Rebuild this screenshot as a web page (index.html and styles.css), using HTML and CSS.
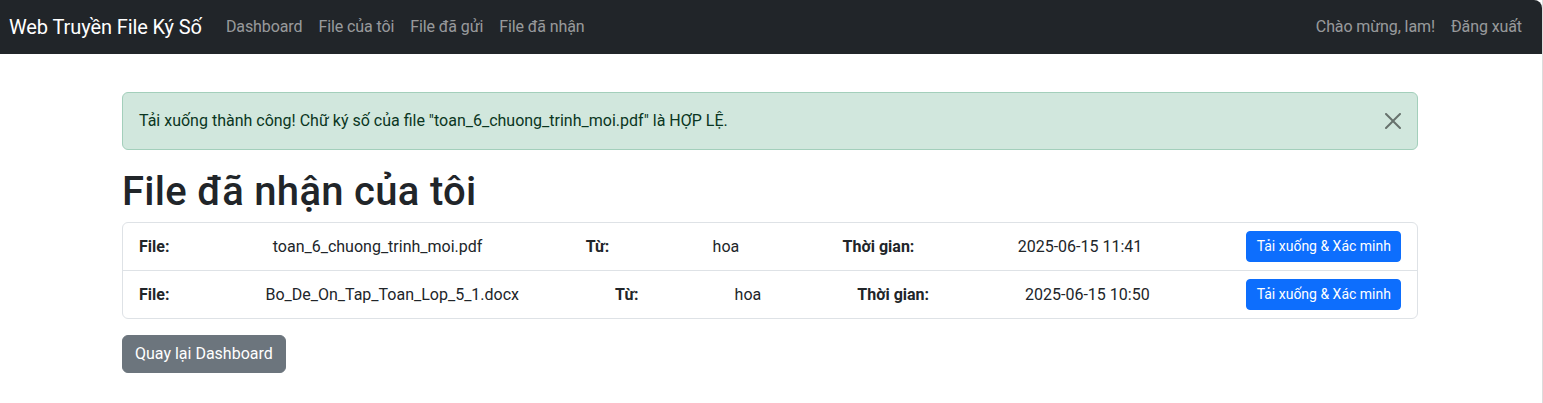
FILE: index.html
```html
<!DOCTYPE html>
<html lang="vi">
<head>
<meta charset="utf-8">
<title>File đã nhận</title>
<link rel="stylesheet" href="styles.css">
</head>
<body>
<div class="page">
  <nav class="navbar">
    <div class="nav-left">
      <a class="brand" href="#">Web Truyền File Ký Số</a>
      <ul class="nav-links">
        <li><a href="#">Dashboard</a></li>
        <li><a href="#">File của tôi</a></li>
        <li><a href="#">File đã gửi</a></li>
        <li><a href="#">File đã nhận</a></li>
      </ul>
    </div>
    <div class="nav-right">
      <span class="nav-text">Chào mừng, lam!</span>
      <a class="nav-link" href="#">Đăng xuất</a>
    </div>
  </nav>

  <main class="container">
    <div class="alert">
      <span>Tải xuống thành công! Chữ ký số của file "toan_6_chuong_trinh_moi.pdf" là HỢP LỆ.</span>
      <button class="btn-close" type="button" aria-label="Close">
        <svg viewBox="0 0 16 16" width="16" height="16"><path d="M.293.293a1 1 0 0 1 1.414 0L8 6.586 14.293.293a1 1 0 1 1 1.414 1.414L9.414 8l6.293 6.293a1 1 0 0 1-1.414 1.414L8 9.414l-6.293 6.293a1 1 0 0 1-1.414-1.414L6.586 8 .293 1.707a1 1 0 0 1 0-1.414z" fill="#000"/></svg>
      </button>
    </div>

    <h1 class="title">File đã nhận của tôi</h1>

    <ul class="list">
      <li class="list-item">
        <strong>File:</strong>
        <span>toan_6_chuong_trinh_moi.pdf</span>
        <strong>Từ:</strong>
        <span>hoa</span>
        <strong>Thời gian:</strong>
        <span>2025-06-15 11:41</span>
        <a class="btn btn-primary btn-sm" href="#">Tải xuống &amp; Xác minh</a>
      </li>
      <li class="list-item">
        <strong>File:</strong>
        <span>Bo_De_On_Tap_Toan_Lop_5_1.docx</span>
        <strong>Từ:</strong>
        <span>hoa</span>
        <strong>Thời gian:</strong>
        <span>2025-06-15 10:50</span>
        <a class="btn btn-primary btn-sm" href="#">Tải xuống &amp; Xác minh</a>
      </li>
    </ul>

    <a class="btn btn-secondary" href="#">Quay lại Dashboard</a>
  </main>
</div>
</body>
</html>
```
FILE: styles.css
```css
* { box-sizing: border-box; }
html, body { margin: 0; padding: 0; background: #fff; }
body {
  font-family: Roboto, "Liberation Sans", sans-serif;
  font-size: 16px;
  line-height: 1.5;
  color: #212529;
}
.page {
  width: 1543px;
  min-height: 403px;
  border-right: 1px solid #dcdcdc;
}
a { text-decoration: none; }

.navbar {
  height: 54px;
  background: #212529;
  display: flex;
  align-items: center;
  justify-content: space-between;
  padding: 0 12px 0 9px;
  border-top-right-radius: 8px;
}
.nav-left, .nav-right { display: flex; align-items: center; }
.brand {
  color: #fff;
  font-size: 20px;
  line-height: 30px;
  margin-right: 16px;
  letter-spacing: -0.1px;
}
.nav-links {
  list-style: none;
  display: flex;
  margin: 0;
  padding: 0;
}
.nav-links a, .nav-link, .nav-text {
  display: block;
  padding: 0 8px;
  color: rgba(255,255,255,.55);
  line-height: 24px;
  letter-spacing: -0.1px;
}

.container {
  width: 1320px;
  margin: 0 0 0 110px;
  padding: 38px 12px 0;
}

.alert {
  position: relative;
  background: #d1e7dd;
  border: 1px solid #a3cfbb;
  color: #0a3622;
  border-radius: 6px;
  padding: 16px 48px 16px 16px;
  margin-bottom: 16px;
}
.btn-close {
  position: absolute;
  top: 0;
  right: 0;
  padding: 20px 16px;
  border: 0;
  background: transparent;
  opacity: .5;
  line-height: 0;
  cursor: pointer;
}
.btn-close svg { display: block; }

.title {
  font-size: 40px;
  font-weight: 500;
  line-height: 1.2;
  margin: 0 0 8px;
  color: #212529;
  letter-spacing: 0.3px;
  padding-top: 2px;
  height: 48px;
}

.list {
  list-style: none;
  margin: 0;
  padding: 0;
  border: 1px solid #dee2e6;
  border-radius: 6px;
}
.list-item {
  display: flex;
  align-items: center;
  justify-content: space-between;
  padding: 8px 16px;
}
.list-item + .list-item { border-top: 1px solid #dee2e6; }
.list-item strong { font-weight: 700; }

.btn {
  display: inline-block;
  color: #fff;
  border: 1px solid transparent;
  text-align: center;
}
.btn-primary { background: #0d6efd; border-color: #0d6efd; }
.btn-sm {
  font-size: 14px;
  line-height: 21px;
  padding: 4px 9px 4px 10px;
  border-radius: 4px;
}
.btn-secondary {
  background: #6c757d;
  border-color: #6c757d;
  margin-top: 16px;
  padding: 6px 12px;
  line-height: 24px;
  border-radius: 6px;
}
```
